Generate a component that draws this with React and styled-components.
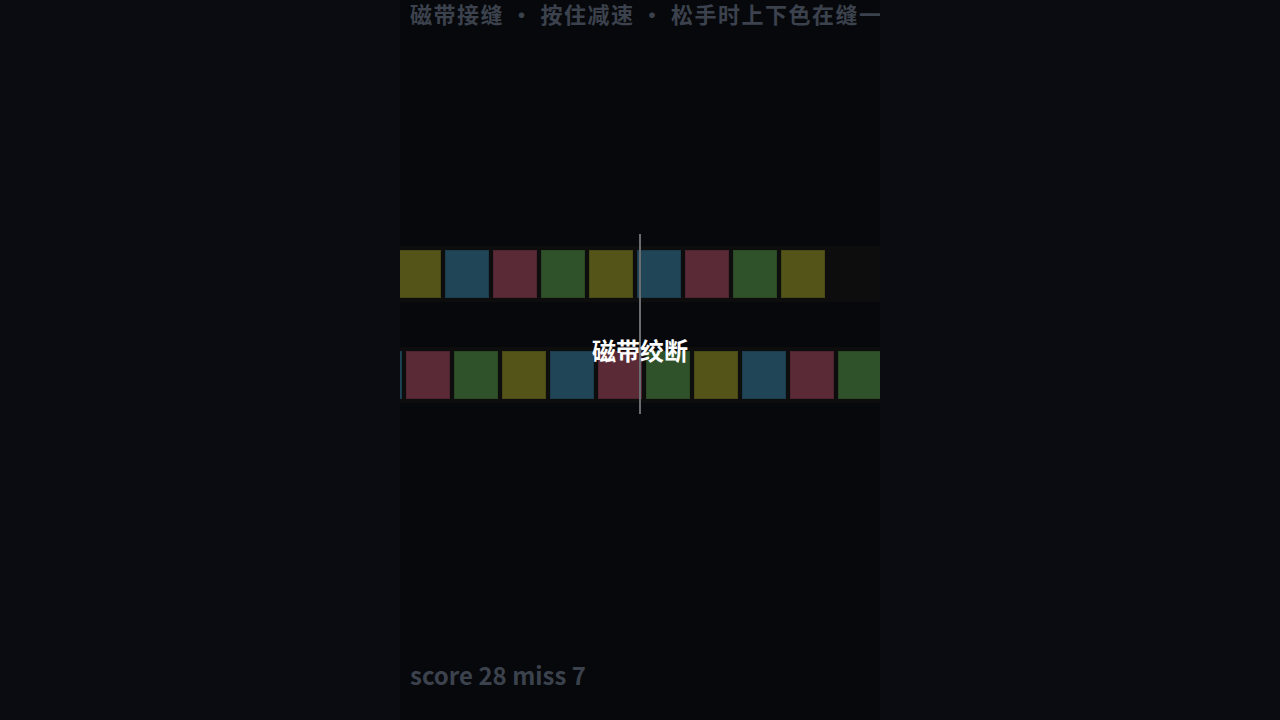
import React from "react";
import styled, { createGlobalStyle } from "styled-components";

const Global = createGlobalStyle`
  html, body { margin: 0; padding: 0; background: #0b0c11; }
  body { font-family: "Noto Sans CJK SC", "Noto Sans", sans-serif; }
  #root { min-height: 100vh; }
`;

const Page = styled.div`
  display: flex;
  justify-content: center;
  height: 720px;
  background: #0b0c11;
`;

const Panel = styled.div`
  width: 480px;
  height: 720px;
  background: #07080b;
  display: flex;
  flex-direction: column;
  overflow: hidden;
`;

const Header = styled.div`
  padding: 0 10px;
  font-size: 22px;
  line-height: 26px;
  height: 30px;
  font-weight: 700;
  color: #3b424d;
  white-space: nowrap;
  letter-spacing: 1.5px;
`;

const Stage = styled.div`
  position: relative;
  margin-top: 204px;
  padding: 12px 0 11px;
  display: flex;
  flex-direction: column;
  gap: 45px;
`;

const Band = styled.div`
  height: 56px;
  background: #0d0d0d;
  display: flex;
  align-items: center;
  gap: 4px;
  margin-left: ${(p) => p.$offset}px;
`;

const colors = {
  y: "#545419",
  b: "#1f4557",
  r: "#5a2a37",
  g: "#30522a",
};

const Cell = styled.div`
  flex: 0 0 44px;
  height: 48px;
  background: ${(p) => colors[p.$c]};
  box-shadow: inset 0 0 0 1px rgba(0, 0, 0, 0.12);
`;

const Playhead = styled.div`
  position: absolute;
  left: 239px;
  top: 0;
  bottom: 0;
  width: 2px;
  background: #6c6d70;
`;

const Banner = styled.div`
  position: absolute;
  left: 0;
  right: 0;
  top: 101px;
  text-align: center;
  font-size: 24px;
  line-height: 30px;
  font-weight: 700;
  color: #ffffff;
`;

const Footer = styled.div`
  margin-top: auto;
  padding: 0 10px 28px;
  font-size: 24px;
  line-height: 34px;
  font-weight: 700;
  color: #3b424d;
`;

const topRow = ["y", "b", "r", "g", "y", "b", "r", "g", "y"];
const bottomRow = ["b", "r", "g", "y", "b", "r", "g", "y", "b", "r", "g"];

export default function App() {
  return (
    <>
      <Global />
      <Page>
        <Panel>
          <Header>磁带接缝 · 按住减速 · 松手时上下色在缝一致得分</Header>
          <Stage>
            <Band $offset={-3}>
              {topRow.map((c, i) => (
                <Cell key={i} $c={c} />
              ))}
            </Band>
            <Band $offset={-42}>
              {bottomRow.map((c, i) => (
                <Cell key={i} $c={c} />
              ))}
            </Band>
            <Playhead />
            <Banner>磁带绞断</Banner>
          </Stage>
          <Footer>score 28 miss 7</Footer>
        </Panel>
      </Page>
    </>
  );
}
